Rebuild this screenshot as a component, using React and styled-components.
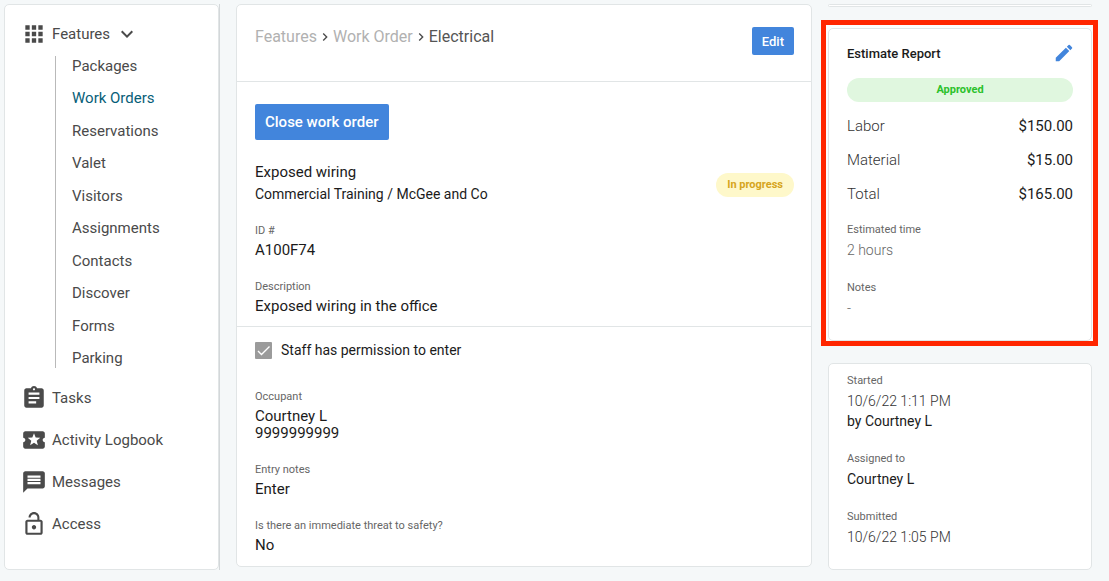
import { Fragment } from "react";
import styled, { createGlobalStyle } from "styled-components";
import {
  MdApps,
  MdAssignment,
  MdChevronRight,
  MdEdit,
  MdExpandMore,
  MdLocalActivity,
  MdLockOpen,
  MdMessage,
} from "react-icons/md";

const GlobalStyle = createGlobalStyle`
  * {
    box-sizing: border-box;
  }
  body {
    margin: 0;
    background: #f5f8f9;
    color: #1b1b1b;
    font-family: Roboto, "Liberation Sans", sans-serif;
    font-size: 15px;
  }
  a {
    color: inherit;
    text-decoration: none;
  }
  ul, dl, dd, h1, h2, p {
    margin: 0;
    padding: 0;
    list-style: none;
  }
  button {
    font-family: inherit;
    cursor: pointer;
  }
`;

const Page = styled.div`
  display: grid;
  grid-template-columns: 216px minmax(0, 1fr) 264px;
  gap: 16px;
  align-items: start;
  padding: 4px 17px 10px 4px;
`;

const Card = styled.section`
  background: #fff;
  border: 1px solid #e1e5e6;
  border-radius: 5px;
`;

const SidebarWrap = styled.div`
  align-self: stretch;
  display: flex;
  border-right: 1px solid #d3d7d9;
`;

const Sidebar = styled(Card).attrs({ as: "nav" })`
  flex: 1;
  padding: 16px;
  color: #4a4a4a;
`;

const NavButton = styled.button`
  display: flex;
  align-items: center;
  gap: 5px;
  height: 26px;
  padding: 0;
  border: 0;
  background: none;
  color: inherit;
  font-size: 15px;
`;

const NavLink = styled.a`
  display: flex;
  align-items: center;
  gap: 5px;
  height: 26px;
`;

const MainNav = styled.ul`
  display: flex;
  flex-direction: column;
  gap: 16px;
  margin-top: 17px;
`;

const SubNav = styled.ul`
  display: flex;
  flex-direction: column;
  justify-content: space-between;
  min-height: 312px;
  margin: 9px 0 0 34px;
  padding-left: 16px;
  border-left: 1px solid #b9b9b9;
  line-height: 20px;
`;

const SubLink = styled.a`
  color: ${(props) => (props.$active ? "#075e78" : "inherit")};
`;

const Header = styled.header`
  display: flex;
  justify-content: space-between;
  align-items: flex-start;
  padding: 22px 17px 26px 18px;
  border-bottom: 1px solid #e1e5e6;
`;

const Breadcrumbs = styled.nav`
  display: flex;
  align-items: center;
  color: #b1b1b1;
  font-size: 16px;
  line-height: 20px;
  svg {
    color: #4a4a4a;
  }
`;

const Current = styled.span`
  color: #555;
`;

const Button = styled.button`
  height: ${(props) => (props.$small ? "28px" : "36px")};
  padding: 0 10px;
  border: 0;
  border-radius: 2px;
  background: #4285dc;
  color: #fff;
  font-size: ${(props) => (props.$small ? "13px" : "15px")};
  font-weight: 500;
`;

const Section = styled.div`
  padding: ${(props) => props.$padding};
  & + & {
    border-top: 1px solid #e1e5e6;
  }
`;

const Summary = styled.div`
  display: flex;
  justify-content: space-between;
  align-items: flex-start;
  margin: 21px 0 17px;
  line-height: 22px;
`;

const Title = styled.h1`
  font-size: 15px;
  font-weight: 400;
`;

const Location = styled.p`
  font-size: 14px;
`;

const Badge = styled.span`
  display: block;
  padding: 0 11px;
  border-radius: 12px;
  background: ${(props) => (props.$approved ? "#e0f7df" : "#fef8ca")};
  color: ${(props) => (props.$approved ? "#2bc12b" : "#d6a51d")};
  font-size: 11px;
  font-weight: 700;
  line-height: 24px;
  text-align: center;
`;

const Status = styled(Badge)`
  margin-top: 12px;
`;

const Fields = styled.dl`
  display: flex;
  flex-direction: column;
  gap: 19px;
`;

const Label = styled.dt`
  color: #666;
  font-size: 11px;
  line-height: 18px;
`;

const Value = styled.dd`
  margin-top: 2px;
  line-height: 17px;
`;

const SideValue = styled.dd`
  margin-top: 1px;
  color: ${(props) => props.$color || "#1b1b1b"};
  font-size: 14px;
  font-weight: ${(props) => (props.$color ? 300 : 400)};
  line-height: 20px;
  & + & {
    margin-top: 0;
  }
`;

const Permission = styled.label`
  display: flex;
  align-items: center;
  gap: 9px;
  margin-bottom: 29px;
  font-size: 14px;
  line-height: 17px;
`;

const CheckWrap = styled.span`
  display: grid;
  width: 17px;
  height: 17px;
  > * {
    grid-area: 1 / 1;
  }
  svg {
    pointer-events: none;
  }
`;

const Checkbox = styled.input`
  appearance: none;
  width: 17px;
  height: 17px;
  margin: 0;
  border-radius: 1px;
  background: #9b9b9b;
`;

const SideColumn = styled.aside`
  display: flex;
  flex-direction: column;
`;

const EmptyCard = styled(Card)`
  height: 3px;
`;

const Highlight = styled.div`
  margin: 13px -6px 17px -7px;
  padding: 3px 1px 0 2px;
  border: 5px solid #ff2600;
  background: #fcfdfd;
`;

const EstimateCard = styled(Card)`
  padding: 13px 18px 22px;
`;

const DatesCard = styled(Card)`
  padding: 8px 18px 22px;
`;

const EstimateHead = styled.div`
  display: flex;
  justify-content: space-between;
  align-items: center;
  margin-bottom: 14px;
`;

const EstimateTitle = styled.h2`
  font-size: 13px;
  font-weight: 500;
`;

const IconButton = styled.button`
  display: flex;
  margin-right: -2px;
  padding: 0;
  border: 0;
  background: none;
  color: #4285dc;
`;

const Costs = styled.dl`
  display: grid;
  gap: 14px;
  margin: 14px 0 17px;
  line-height: 20px;
`;

const CostRow = styled.div`
  display: flex;
  justify-content: space-between;
  dt {
    color: #333;
    font-weight: 300;
  }
`;

const features = [
  "Packages",
  "Work Orders",
  "Reservations",
  "Valet",
  "Visitors",
  "Assignments",
  "Contacts",
  "Discover",
  "Forms",
  "Parking",
];

const links = [
  { name: "Tasks", Icon: MdAssignment },
  { name: "Activity Logbook", Icon: MdLocalActivity },
  { name: "Messages", Icon: MdMessage },
  { name: "Access", Icon: MdLockOpen },
];

const costs = [
  ["Labor", "$150.00"],
  ["Material", "$15.00"],
  ["Total", "$165.00"],
];

const Field = ({ label, values }) => (
  <div>
    <Label>{label}</Label>
    <Value>
      {values.map((value, index) => (
        <Fragment key={value}>
          {index > 0 && <br />}
          {value}
        </Fragment>
      ))}
    </Value>
  </div>
);

const App = () => (
  <>
    <GlobalStyle />
    <Page>
      <SidebarWrap>
        <Sidebar>
          <NavButton type="button" aria-expanded="true">
            <MdApps size={26} />
            Features
            <MdExpandMore size={24} />
          </NavButton>
          <SubNav>
            {features.map((name) => (
              <li key={name}>
                <SubLink href="#" $active={name === "Work Orders"}>
                  {name}
                </SubLink>
              </li>
            ))}
          </SubNav>
          <MainNav>
            {links.map(({ name, Icon }) => (
              <li key={name}>
                <NavLink href="#">
                  <Icon size={26} />
                  {name}
                </NavLink>
              </li>
            ))}
          </MainNav>
        </Sidebar>
      </SidebarWrap>

      <Card as="main">
        <Header>
          <Breadcrumbs>
            <a href="#">Features</a>
            <MdChevronRight size={16} />
            <a href="#">Work Order</a>
            <MdChevronRight size={16} />
            <Current>Electrical</Current>
          </Breadcrumbs>
          <Button type="button" $small>
            Edit
          </Button>
        </Header>
        <Section $padding="22px 17px 11px 18px">
          <Button type="button">Close work order</Button>
          <Summary>
            <div>
              <Title>Exposed wiring</Title>
              <Location>Commercial Training / McGee and Co</Location>
            </div>
            <Status>In progress</Status>
          </Summary>
          <Fields>
            <Field label="ID #" values={["A100F74"]} />
            <Field label="Description" values={["Exposed wiring in the office"]} />
          </Fields>
        </Section>
        <Section $padding="15px 17px 12px 18px">
          <Permission>
            <CheckWrap>
              <Checkbox type="checkbox" defaultChecked />
              <svg width="17" height="17" viewBox="0 0 17 17" fill="none">
                <path d="M3 9l3.5 3.5L14.5 4.5" stroke="#fff" strokeWidth="1.4" />
              </svg>
            </CheckWrap>
            Staff has permission to enter
          </Permission>
          <Fields>
            <Field label="Occupant" values={["Courtney L", "9999999999"]} />
            <Field label="Entry notes" values={["Enter"]} />
            <Field label="Is there an immediate threat to safety?" values={["No"]} />
          </Fields>
        </Section>
      </Card>

      <SideColumn>
        <EmptyCard />
        <Highlight>
          <EstimateCard>
            <EstimateHead>
              <EstimateTitle>Estimate Report</EstimateTitle>
              <IconButton type="button" aria-label="Edit estimate">
                <MdEdit size={22} />
              </IconButton>
            </EstimateHead>
            <Badge $approved>Approved</Badge>
            <Costs>
              {costs.map(([name, price]) => (
                <CostRow key={name}>
                  <dt>{name}</dt>
                  <dd>{price}</dd>
                </CostRow>
              ))}
            </Costs>
            <Fields>
              <div>
                <Label>Estimated time</Label>
                <SideValue $color="#666">2 hours</SideValue>
              </div>
              <div>
                <Label>Notes</Label>
                <SideValue $color="#666">-</SideValue>
              </div>
            </Fields>
          </EstimateCard>
        </Highlight>
        <DatesCard>
          <Fields>
            <div>
              <Label>Started</Label>
              <SideValue $color="#333">10/6/22 1:11 PM</SideValue>
              <SideValue>by Courtney L</SideValue>
            </div>
            <div>
              <Label>Assigned to</Label>
              <SideValue>Courtney L</SideValue>
            </div>
            <div>
              <Label>Submitted</Label>
              <SideValue $color="#333">10/6/22 1:05 PM</SideValue>
            </div>
          </Fields>
        </DatesCard>
      </SideColumn>
    </Page>
  </>
);

export default App;
